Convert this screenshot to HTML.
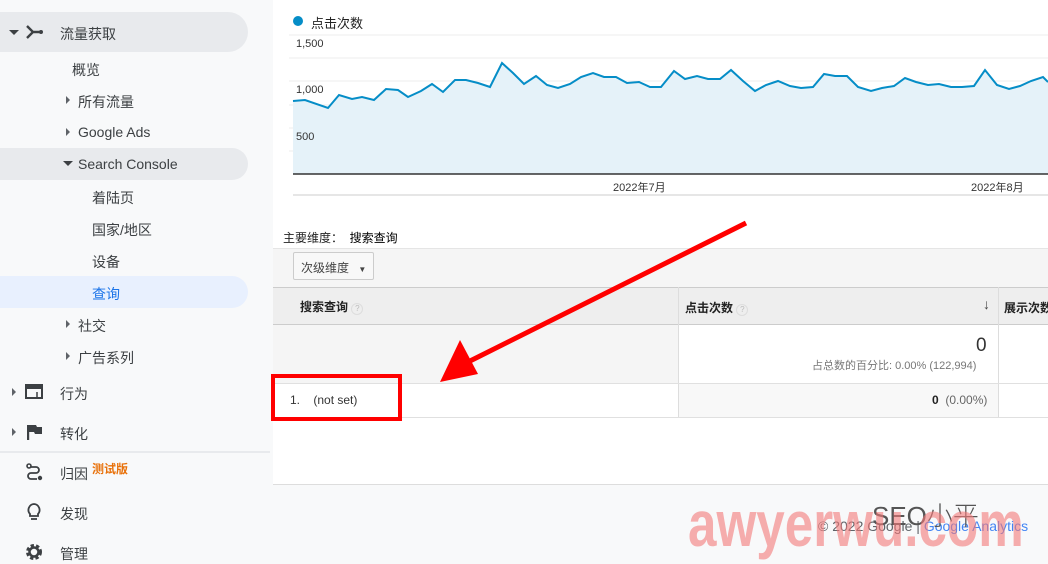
<!DOCTYPE html>
<html><head><meta charset="utf-8"><style>
*{margin:0;padding:0;box-sizing:border-box}
body{width:1048px;height:560px;overflow:hidden;background:#f8f9fa;font-family:"Liberation Sans","Noto Sans CJK SC",sans-serif;position:relative;color:#3c4043}
.a{position:absolute;white-space:nowrap}
.nav{font-size:14px;color:#3c4043}
.tri{position:absolute;width:0;height:0}
.tr{border-top:4px solid transparent;border-bottom:4px solid transparent;border-left:4px solid #5f6368}
.td{border-left:5px solid transparent;border-right:5px solid transparent;border-top:5px solid #3c4043}
.sm{font-size:12px;color:#222}
</style></head><body>
<div class="a" style="left:0;top:12px;width:248px;height:40px;background:#e8eaed;border-radius:0 20px 20px 0"></div>
<div class="a" style="left:0;top:148px;width:248px;height:32px;background:#e8eaed;border-radius:0 16px 16px 0"></div>
<div class="a" style="left:0;top:276px;width:248px;height:32px;background:#e8f0fe;border-radius:0 16px 16px 0"></div>
<div class="tri td" style="left:9px;top:30px"></div>
<svg class="a" style="left:24px;top:23px" width="20" height="18" viewBox="0 0 20 18"><path d="M3 3 L9 9 L3 15 M9 9 H16" stroke="#3c4043" stroke-width="2.4" fill="none"/><circle cx="17" cy="9" r="2" fill="#3c4043"/></svg>
<div class="a nav" style="left:60px;top:24px">流量获取</div>
<div class="a nav" style="left:72px;top:60px">概览</div>
<div class="tri tr" style="left:66px;top:96px"></div><div class="a nav" style="left:78px;top:92px">所有流量</div>
<div class="tri tr" style="left:66px;top:128px"></div><div class="a nav" style="left:78px;top:124px">Google Ads</div>
<div class="tri td" style="left:63px;top:161px"></div><div class="a nav" style="left:78px;top:156px">Search Console</div>
<div class="a nav" style="left:92px;top:188px">着陆页</div>
<div class="a nav" style="left:92px;top:220px">国家/地区</div>
<div class="a nav" style="left:92px;top:252px">设备</div>
<div class="a nav" style="left:92px;top:284px;color:#1a73e8">查询</div>
<div class="tri tr" style="left:66px;top:320px"></div><div class="a nav" style="left:78px;top:316px">社交</div>
<div class="tri tr" style="left:66px;top:352px"></div><div class="a nav" style="left:78px;top:348px">广告系列</div>
<div class="tri tr" style="left:12px;top:388px"></div>
<svg class="a" style="left:25px;top:384px" width="18" height="15"><rect x="1" y="1" width="16" height="13" fill="none" stroke="#3c4043" stroke-width="2"/><rect x="1" y="1" width="16" height="4" fill="#3c4043"/><line x1="12" y1="8" x2="12" y2="14" stroke="#3c4043" stroke-width="1.5"/></svg>
<div class="a nav" style="left:60px;top:384px">行为</div>
<div class="tri tr" style="left:12px;top:428px"></div>
<svg class="a" style="left:27px;top:424px" width="16" height="16"><path d="M1 1 V16" stroke="#3c4043" stroke-width="2.4"/><path d="M2 1 H9 L10 3 H15 V10 H8 L7 8 H2Z" fill="#3c4043"/></svg>
<div class="a nav" style="left:60px;top:424px">转化</div>
<div class="a" style="left:0;top:451px;width:270px;height:2px;background:#e8eaed"></div>
<svg class="a" style="left:25px;top:463px" width="18" height="18"><circle cx="4" cy="3" r="2" fill="none" stroke="#3c4043" stroke-width="1.6"/><path d="M6 4 H11 A3 3 0 0 1 11 10 H6 A3 3 0 0 0 6 16 H12" stroke="#3c4043" stroke-width="1.8" fill="none"/><circle cx="15" cy="15" r="2.2" fill="#3c4043"/></svg>
<div class="a nav" style="left:60px;top:464px">归因</div>
<div class="a" style="left:92px;top:460px;font-size:12px;font-weight:bold;color:#e8710a">测试版</div>
<svg class="a" style="left:26px;top:503px" width="16" height="18"><path d="M8 1 A6 6 0 0 0 4 11 V13 H12 V11 A6 6 0 0 0 8 1Z" fill="none" stroke="#3c4043" stroke-width="1.8"/><line x1="5" y1="16" x2="11" y2="16" stroke="#3c4043" stroke-width="1.8"/></svg>
<div class="a nav" style="left:60px;top:504px">发现</div>
<svg class="a" style="left:25px;top:543px" width="18" height="18"><circle cx="9" cy="9" r="6" fill="none" stroke="#3c4043" stroke-width="4" stroke-dasharray="3 2"/><circle cx="9" cy="9" r="4.5" fill="none" stroke="#3c4043" stroke-width="2.5"/></svg>
<div class="a nav" style="left:60px;top:544px">管理</div>

<div class="a" style="left:273px;top:0;width:775px;height:485px;background:#fff;border-bottom:1px solid #ddd"></div>
<div class="a" style="left:293px;top:16px;width:10px;height:10px;border-radius:50%;background:#058dc7"></div>
<div class="a sm" style="left:311px;top:13px;font-size:13px">点击次数</div>
<svg class="a" style="left:0;top:0" width="1048" height="200">
<g stroke="#eee" stroke-width="1"><line x1="289" y1="35" x2="1048" y2="35"/><line x1="289" y1="58" x2="1048" y2="58"/><line x1="289" y1="81" x2="1048" y2="81"/><line x1="289" y1="105" x2="1048" y2="105"/><line x1="289" y1="128" x2="1048" y2="128"/><line x1="289" y1="151" x2="1048" y2="151"/></g>
<path d="M293,101 305,100 328,108 339,95 352,99 362,97 374,100 386,89 398,90 408,97 421,91 432,84 443,92 455,80 466,80 478,83 490,87 502,63 513,73 524,84 536,76 547,85 558,88 570,84 581,77 593,73 604,77 616,77 627,83 639,82 650,87 661,87 674,71 685,79 697,76 708,79 720,79 731,70 743,81 755,91 766,85 778,81 790,86 801,88 813,87 824,74 835,76 847,76 858,87 871,91 882,88 894,86 905,78 916,82 928,85 939,84 951,87 962,87 974,86 985,70 997,85 1009,89 1020,86 1031,81 1043,77 1048,82 L1048,174 L293,174Z" fill="#e5f2f9"/>
<path d="M293,101 305,100 328,108 339,95 352,99 362,97 374,100 386,89 398,90 408,97 421,91 432,84 443,92 455,80 466,80 478,83 490,87 502,63 513,73 524,84 536,76 547,85 558,88 570,84 581,77 593,73 604,77 616,77 627,83 639,82 650,87 661,87 674,71 685,79 697,76 708,79 720,79 731,70 743,81 755,91 766,85 778,81 790,86 801,88 813,87 824,74 835,76 847,76 858,87 871,91 882,88 894,86 905,78 916,82 928,85 939,84 951,87 962,87 974,86 985,70 997,85 1009,89 1020,86 1031,81 1043,77 1048,82" fill="none" stroke="#058dc7" stroke-width="2"/>
<line x1="293" y1="174" x2="1048" y2="174" stroke="#333" stroke-width="1.5"/>
<line x1="293" y1="195" x2="1048" y2="195" stroke="#ccc" stroke-width="1"/>
</svg>
<div class="a" style="left:296px;top:38px;font-size:11px;color:#333">1,500</div>
<div class="a" style="left:296px;top:84px;font-size:11px;color:#333">1,000</div>
<div class="a" style="left:296px;top:131px;font-size:11px;color:#333">500</div>
<div class="a" style="left:613px;top:179px;font-size:11px;color:#333">2022年7月</div>
<div class="a" style="left:971px;top:179px;font-size:11px;color:#333">2022年8月</div>

<div class="a sm" style="left:283px;top:229px">主要维度：&nbsp;&nbsp;<span style="color:#000">搜索查询</span></div>
<div class="a" style="left:273px;top:248px;width:775px;height:39px;background:#f5f5f5;border-top:1px solid #e5e5e5"></div>
<div class="a" style="left:293px;top:252px;width:81px;height:28px;background:#f8f8f8;border:1px solid #ccc;border-radius:2px;font-size:12px;color:#444;padding:6px 0 0 7px">次级维度 <span style="font-size:8px;margin-left:6px">▼</span></div>
<div class="a" style="left:273px;top:287px;width:775px;height:38px;background:#eee;border-top:1px solid #ccc;border-bottom:1px solid #ccc"></div>
<div class="a" style="left:678px;top:287px;width:1px;height:131px;background:#ddd"></div>
<div class="a" style="left:998px;top:287px;width:1px;height:131px;background:#ddd"></div>
<div class="a" style="left:273px;top:325px;width:405px;height:58px;background:#f5f5f5"></div>
<div class="a" style="left:679px;top:383px;width:319px;height:35px;background:#f8f8f8"></div>
<div class="a" style="left:273px;top:383px;width:775px;height:1px;background:#e0e0e0"></div>
<div class="a" style="left:273px;top:417px;width:775px;height:1px;background:#e0e0e0"></div>
<div class="a sm" style="left:300px;top:298px;font-weight:bold;color:#222">搜索查询 <span style="display:inline-block;width:12px;height:12px;border:1px solid #ddd;border-radius:50%;font-size:8px;color:#bbb;text-align:center;line-height:10px;font-weight:normal">?</span></div>
<div class="a sm" style="left:685px;top:299px;font-weight:bold;color:#222">点击次数 <span style="display:inline-block;width:12px;height:12px;border:1px solid #ddd;border-radius:50%;font-size:8px;color:#bbb;text-align:center;line-height:10px;font-weight:normal">?</span></div>
<div class="a" style="left:983px;top:296px;font-size:14px;color:#444">↓</div>
<div class="a sm" style="left:1004px;top:299px;font-weight:bold;color:#222">展示次数</div>
<div class="a" style="left:976px;top:335px;font-size:19px;color:#333">0</div>
<div class="a" style="left:812px;top:357px;font-size:11px;color:#777">占总数的百分比: 0.00% (122,994)</div>
<div class="a sm" style="left:290px;top:393px;color:#333">1.&nbsp;&nbsp;&nbsp;&nbsp;(not set)</div>
<div class="a sm" style="left:932px;top:393px;color:#222"><b>0</b>&nbsp;&nbsp;<span style="color:#666">(0.00%)</span></div>
<div class="a" style="left:271px;top:374px;width:131px;height:47px;border:4px solid #f00"></div>
<svg class="a" style="left:0;top:0" width="1048" height="560"><line x1="746" y1="223" x2="468" y2="362" stroke="#f00" stroke-width="5"/><polygon points="440,382 460,340 478,374" fill="#f00"/></svg>

<div class="a" style="left:818px;top:518px;font-size:14px;color:#5f6368">© 2022 Google | <span style="color:#4285f4">Google Analytics</span></div>
<div class="a" style="left:872px;top:496px;font-size:26px;color:#555;font-weight:300">SEO小平</div>
<div class="a" style="left:688px;top:492px;font-size:64px;font-weight:bold;color:rgba(244,120,120,0.6);line-height:1;transform:scaleX(0.8);transform-origin:0 0">awyerwu.com</div>
</body></html>
